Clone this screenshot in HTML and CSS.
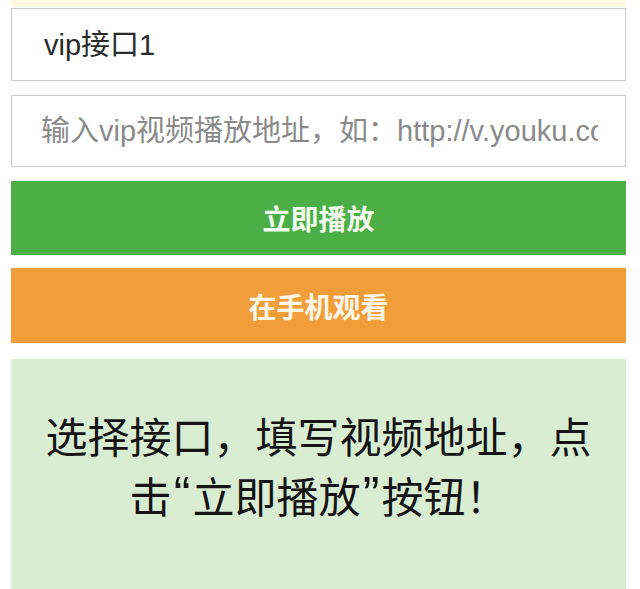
FILE: index.html
```html
<!DOCTYPE html>
<html lang="zh-CN">
<head>
<meta charset="utf-8">
<title>VIP视频解析</title>
<link rel="stylesheet" href="styles.css">
</head>
<body>
<div class="wrap">
  <div class="alert-top"></div>
  <select class="field select">
    <option>vip接口1</option>
    <option>vip接口2</option>
    <option>vip接口3</option>
  </select>
  <input class="field input" type="text" placeholder="输入vip视频播放地址，如：http://v.youku.com/v_show/id_XMjUyMjYxNjk2OA==.html">
  <button class="btn btn-play" type="button">立即播放</button>
  <button class="btn btn-phone" type="button">在手机观看</button>
  <div class="tip">
    <span class="tip-line">选择接口，填写视频地址，点</span>
    <span class="tip-line">击<span class="q">“</span>立即播放<span class="q">”</span>按钮！</span>
  </div>
</div>
</body>
</html>
```
FILE: styles.css
```css
html, body {
  margin: 0;
  padding: 0;
  background: #ffffff;
}
body {
  font-family: "Liberation Sans", "Noto Sans CJK SC", sans-serif;
  overflow: hidden;
}
.wrap {
  display: flex;
  flex-direction: column;
  padding: 0 14px 0 11px;
}
.alert-top {
  height: 7px;
  margin-bottom: 1px;
  background: #fcf8e1;
}
.field {
  box-sizing: border-box;
  display: block;
  width: 100%;
  margin: 0;
  border: 1px solid #c9c9c9;
  border-radius: 0;
  background: #ffffff;
  font-family: "Liberation Sans", "Noto Sans CJK SC", sans-serif;
  font-size: 29px;
  outline: none;
  -webkit-appearance: none;
  appearance: none;
}
.select {
  height: 73px;
  margin-bottom: 14px;
  padding: 0 20px 0 32px;
  color: #2a2a2a;
}
.input {
  height: 72px;
  margin-bottom: 14px;
  padding: 0 27px 0 29px;
  color: #333;
}
.input::placeholder {
  color: #8a8a8a;
}
.btn {
  display: block;
  width: 100%;
  margin: 0;
  padding: 0;
  border: 0;
  border-radius: 0;
  font-family: "Liberation Sans", "Noto Sans CJK SC", sans-serif;
  font-size: 28px;
  font-weight: bold;
  color: #ffffff;
}
.btn-play {
  height: 74px;
  margin-bottom: 13px;
  background: #4cae47;
  color: #f2fbec;
}
.btn-phone {
  height: 75px;
  margin-bottom: 16px;
  background: #f09d3a;
  color: #fff6e8;
}
.tip {
  height: 230px;
  box-sizing: border-box;
  padding: 46px 20px 0;
  background: #d9edd3;
  color: #141414;
  font-family: "Noto Sans CJK SC", sans-serif;
  font-size: 42px;
  line-height: 60px;
  text-align: center;
}
.tip-line {
  display: block;
  white-space: nowrap;
}
.q {
  display: inline-block;
  width: 21px;
  height: 60px;
  vertical-align: top;
  font-family: "Liberation Sans", sans-serif;
  font-size: 50px;
  line-height: 60px;
  text-align: center;
  overflow: hidden;
}
```
